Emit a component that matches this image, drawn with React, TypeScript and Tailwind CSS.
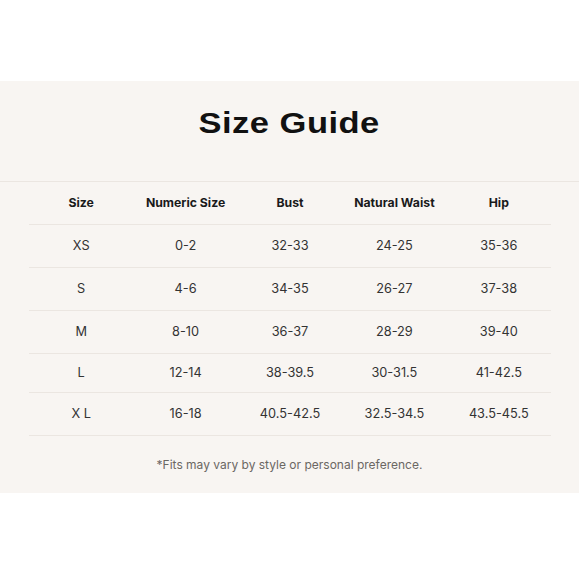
import React from "react";

const rows = [
  { s: "XS", n: "0-2", b: "32-33", w: "24-25", h: "35-36", hh: "h-[43px]" },
  { s: "S", n: "4-6", b: "34-35", w: "26-27", h: "37-38", hh: "h-[43px]" },
  { s: "M", n: "8-10", b: "36-37", w: "28-29", h: "39-40", hh: "h-[43px]" },
  { s: "L", n: "12-14", b: "38-39.5", w: "30-31.5", h: "41-42.5", hh: "h-[39px]" },
  { s: "X L", n: "16-18", b: "40.5-42.5", w: "32.5-34.5", h: "43.5-45.5", hh: "h-[43px]" },
];

export default function App() {
  return (
    <div className="w-[580px] h-[580px] bg-white pt-[81px]" style={{ fontFamily: "Inter, 'Liberation Sans', sans-serif" }}>
      <div className="w-[579px] h-[412px] bg-[#f8f5f2] flex flex-col">
        <div className="h-[101px] flex justify-center border-b border-[#ebe6e1] pt-[25px]">
          <h1 className="text-[29px] leading-[34px] font-bold text-[#111] h-[34px] tracking-[0.4px] scale-x-[1.19]" style={{ fontFamily: "'Liberation Sans', Arial, sans-serif" }}>Size Guide</h1>
        </div>
        <div className="mx-[29px] w-[522px]">
          <div className="grid grid-cols-5 h-[43px] items-center border-b border-[#ebe6e1] text-[12.25px] font-bold text-[#1a1a1a] text-center">
            <div>Size</div>
            <div>Numeric Size</div>
            <div>Bust</div>
            <div>Natural Waist</div>
            <div>Hip</div>
          </div>
          {rows.map((r) => (
            <div key={r.s} className={`grid grid-cols-5 ${r.hh} items-center border-b border-[#ebe6e1] text-[12.75px] text-[#333] text-center`}>
              <div>{r.s}</div>
              <div>{r.n}</div>
              <div>{r.b}</div>
              <div>{r.w}</div>
              <div>{r.h}</div>
            </div>
          ))}
        </div>
        <div className="flex-1 flex items-center justify-center text-[12px] text-[#6b6763] pt-[1px]">
          *Fits may vary by style or personal preference.
        </div>
      </div>
    </div>
  );
}
